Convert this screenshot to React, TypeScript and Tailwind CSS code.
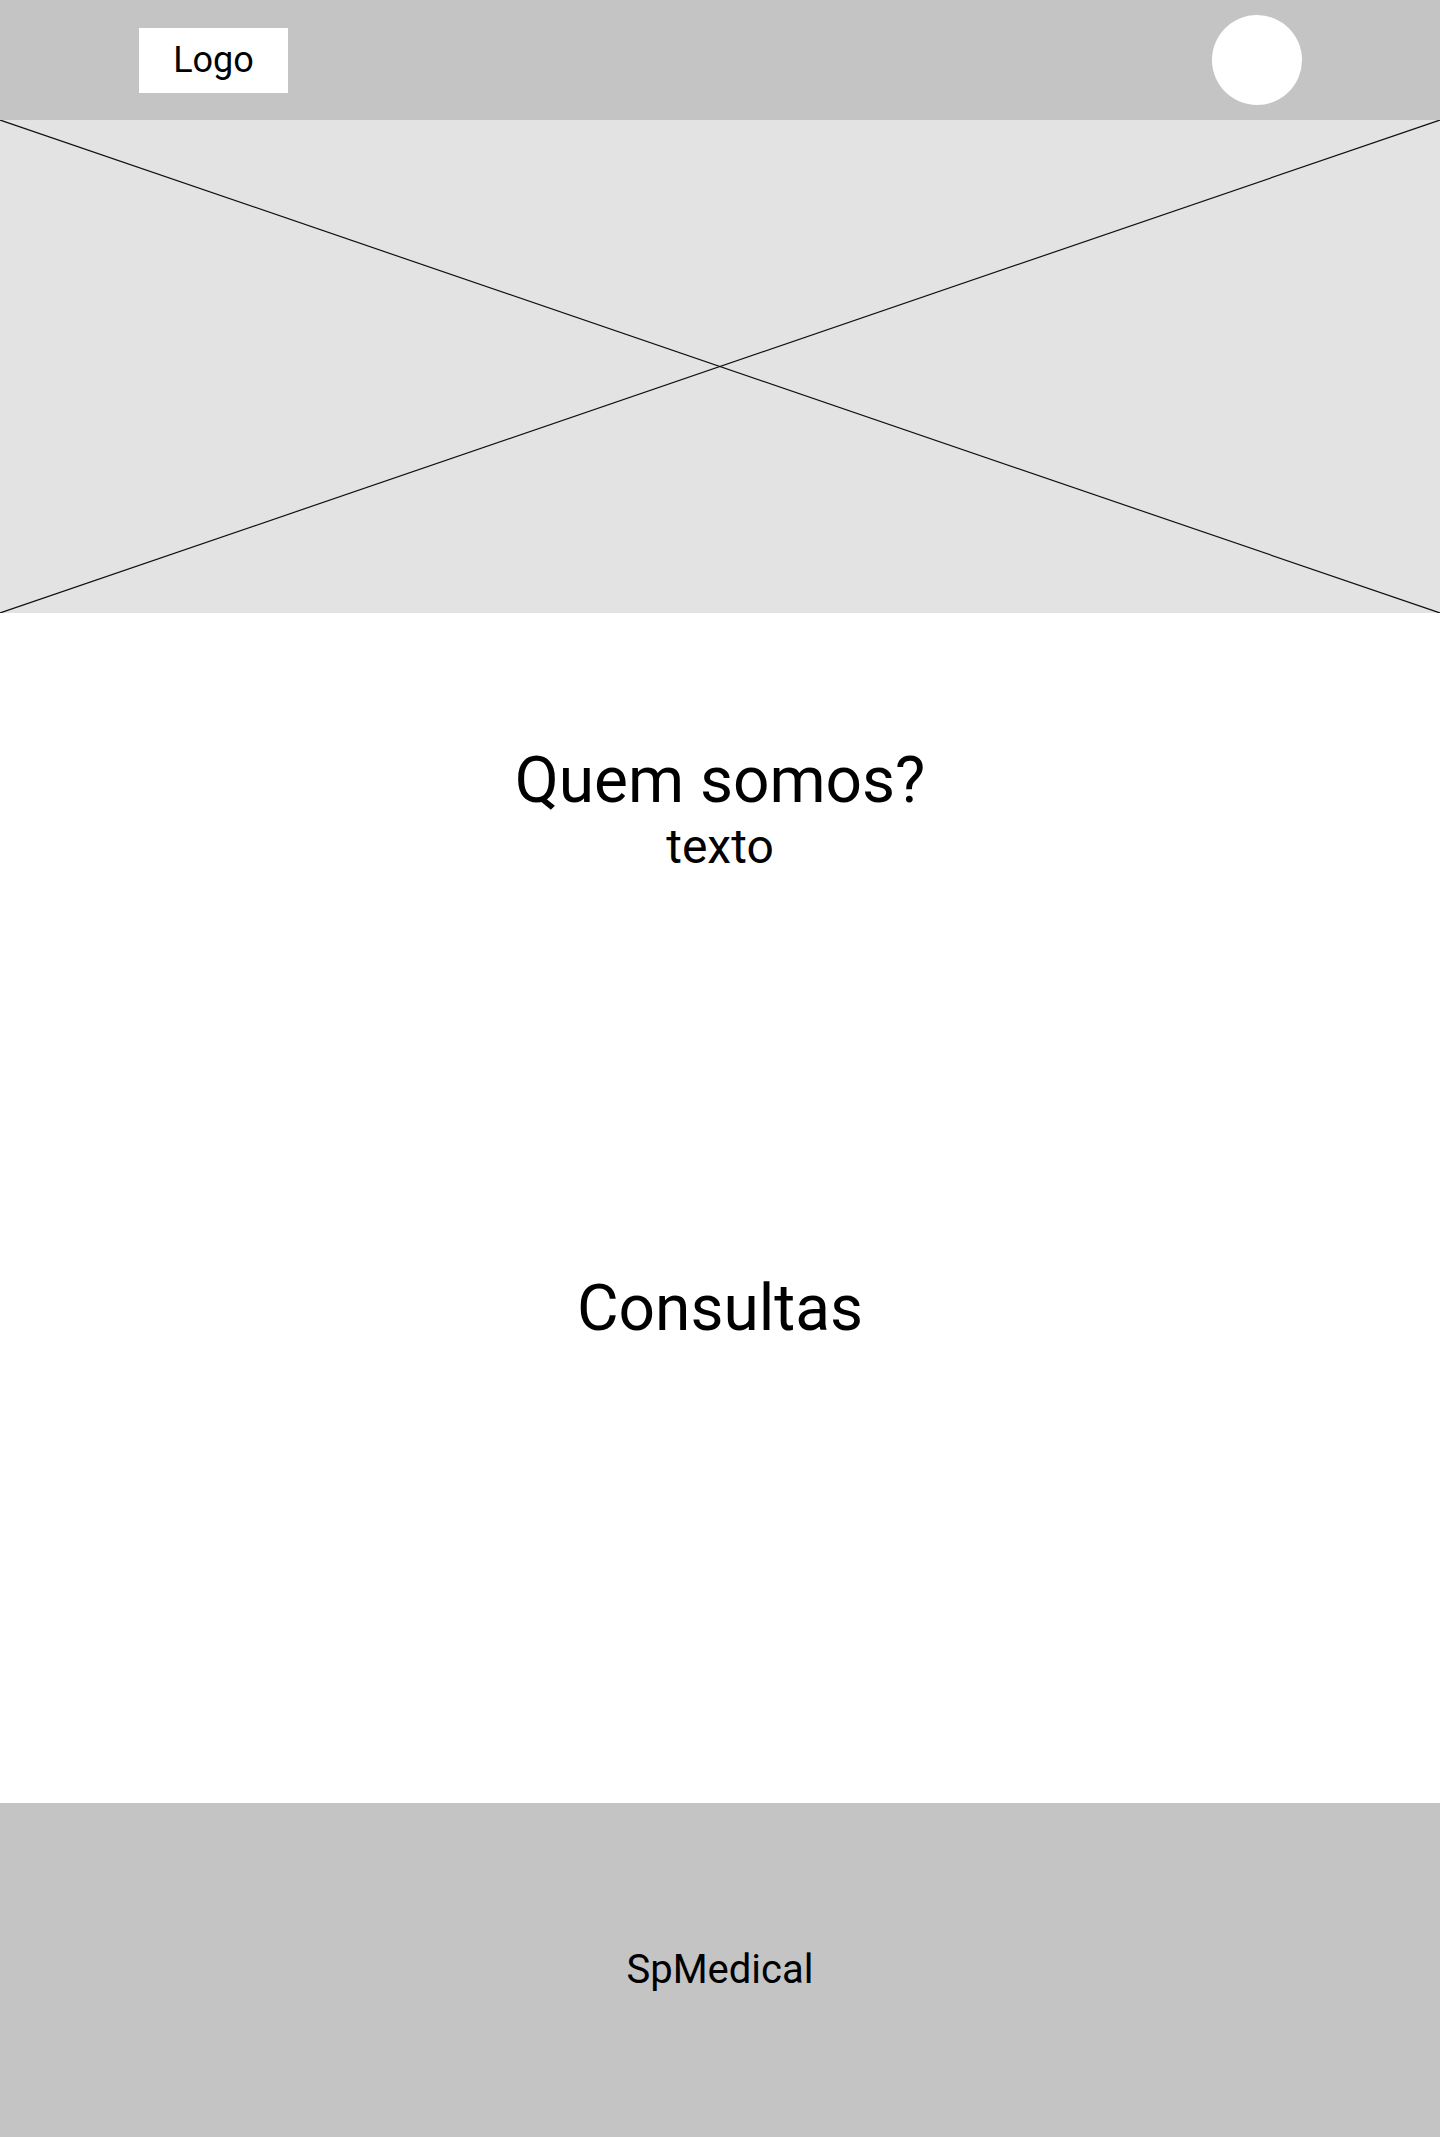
import React from "react";

export default function App() {
  return (
    <div className="w-[1440px] min-h-[2137px] flex flex-col bg-white text-black" style={{ fontFamily: "Roboto, 'Liberation Sans', sans-serif" }}>
      <header className="h-[120px] bg-[#c4c4c4] flex items-center justify-between pl-[139px] pr-[138px]">
        <div className="w-[149px] h-[65px] bg-white flex items-center justify-center text-[36px] leading-none">Logo</div>
        <div className="w-[90px] h-[90px] rounded-full bg-white" />
      </header>
      <section className="relative h-[493px] bg-[#e3e3e3]">
        <svg className="absolute inset-0 w-full h-full" viewBox="0 0 1440 493" preserveAspectRatio="none">
          <line x1="0" y1="0" x2="1440" y2="493" stroke="#111" strokeWidth="1.2" vectorEffect="non-scaling-stroke" />
          <line x1="0" y1="493" x2="1440" y2="0" stroke="#111" strokeWidth="1.2" vectorEffect="non-scaling-stroke" />
        </svg>
      </section>
      <main className="flex flex-col items-center h-[1190px]">
        <div className="pt-[136px] flex flex-col items-center gap-[10px]">
          <h1 className="text-[64px] leading-none font-normal">Quem somos?</h1>
          <p className="text-[48px] leading-none">texto</p>
        </div>
        <h2 className="mt-[406px] text-[64px] leading-none font-normal">Consultas</h2>
      </main>
      <footer className="h-[334px] bg-[#c4c4c4] flex items-center justify-center">
        <span className="text-[40px] leading-none">SpMedical</span>
      </footer>
    </div>
  );
}
